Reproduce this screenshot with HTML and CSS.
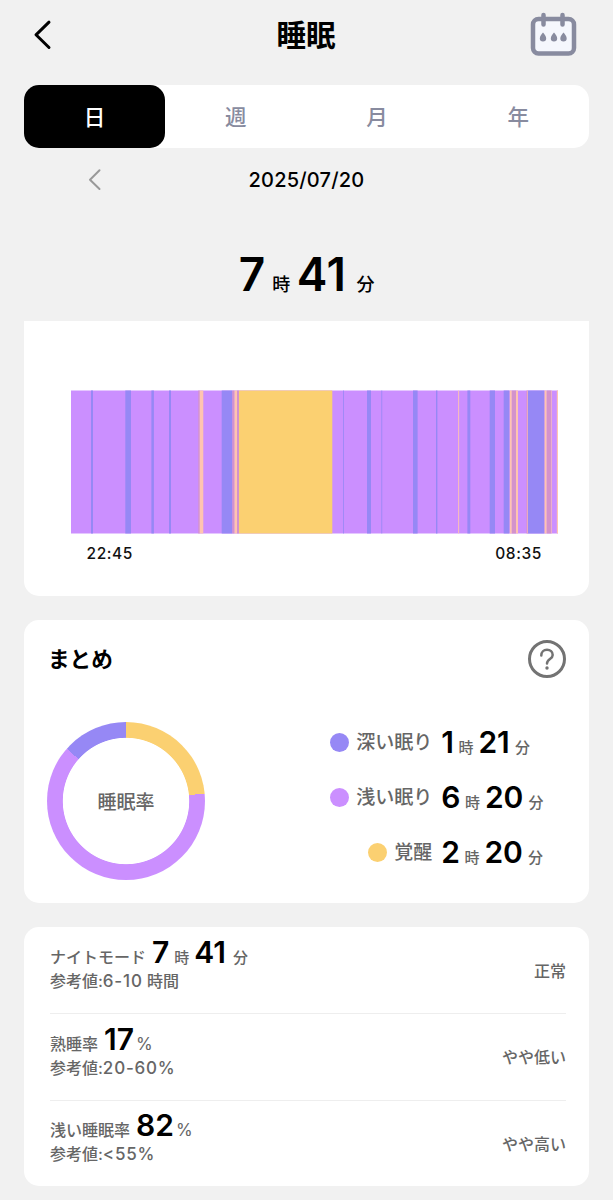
FILE: index.html
```html
<!DOCTYPE html>
<html lang="ja">
  <head>
    <meta charset="UTF-8" />
    <meta name="viewport" content="width=device-width, initial-scale=1.0" />
    <title>睡眠</title>
    <link rel="stylesheet" href="styles.css" />
  </head>

  <body>
    <header class="header">
      <svg class="back" width="20" height="36" viewBox="0 0 20 36">
        <path d="M17 5.200 L4 17.800 L17 30.500" />
      </svg>
      <h1>睡眠</h1>
      <svg class="calendar" width="48" height="46" viewBox="0 0 48 46">
        <rect x="4" y="7" width="41" height="34.500" rx="5.500" />
        <path d="M14.500 3v9.500M33.500 3v9.500" />
        <g class="drops">
          <path d="M14 20.500c1.300 1.600 3.200 3.900 3.200 5.800a3.200 3.200 0 0 1-6.400 0c0-1.900 1.900-4.200 3.200-5.800z" />
          <path d="M25 20.500c1.300 1.600 3.200 3.900 3.200 5.800a3.200 3.200 0 0 1-6.400 0c0-1.900 1.900-4.200 3.200-5.800z" />
          <path d="M34.500 20.500c1.300 1.600 3.200 3.900 3.200 5.800a3.200 3.200 0 0 1-6.400 0c0-1.900 1.900-4.200 3.200-5.800z" />
        </g>
      </svg>
    </header>

    <nav class="tabs">
      <button class="tab active">日</button>
      <button class="tab">週</button>
      <button class="tab">月</button>
      <button class="tab">年</button>
    </nav>

    <div class="date-row">
      <svg class="prev" width="16" height="26" viewBox="0 0 16 26">
        <path d="M12.500 3.300 L3 12.700 L12.500 22" />
      </svg>
      <span class="date">2025/07/20</span>
    </div>

    <p class="total"><b>7</b><span>時</span><b>41</b><span>分</span></p>

    <section class="card chart">
      <svg class="stages" width="487" height="144" viewBox="71 0 487 144">
        <rect class="light" x="71" y="0.500" width="487" height="143" />
        <g class="deep">
          <rect x="91" y="0.500" width="2" height="143" />
          <rect x="125.300" y="0.500" width="5.700" height="143" />
          <rect x="151.400" y="0.500" width="2.500" height="143" />
          <rect x="169" y="0.500" width="2" height="143" />
          <rect x="221.700" y="0.500" width="10.600" height="143" />
          <rect x="343" y="0.500" width="0.800" height="143" />
          <rect x="367" y="0.500" width="4" height="143" />
          <rect x="381.400" y="0.500" width="0.800" height="143" />
          <rect x="413" y="0.500" width="4.600" height="143" />
          <rect x="436" y="0.500" width="1.400" height="143" />
          <rect x="467.400" y="0.500" width="2.900" height="143" />
          <rect x="489.700" y="0.500" width="5.300" height="143" />
          <rect x="503.700" y="0.500" width="5.600" height="143" />
          <rect x="528" y="0.500" width="16.400" height="143" />
        </g>
        <g class="mixed">
          <rect x="198.300" y="0.500" width="1.400" height="143" />
          <rect x="232.300" y="0.500" width="2.200" height="143" />
          <rect x="237" y="0.500" width="2" height="143" />
          <rect x="511.700" y="0.500" width="4.300" height="143" />
          <rect x="526.500" y="0.500" width="1.500" height="143" />
          <rect x="546.700" y="0.500" width="4.600" height="143" />
        </g>
        <g class="pale">
          <rect x="199.700" y="0.500" width="3.600" height="143" />
          <rect x="234.500" y="0.500" width="2.500" height="143" />
          <rect x="458.200" y="0.500" width="0.900" height="143" />
          <rect x="509.800" y="0.500" width="1.900" height="143" />
          <rect x="516" y="0.500" width="2" height="143" />
          <rect x="527.300" y="0.500" width="0.500" height="143" />
          <rect x="544.600" y="0.500" width="2" height="143" />
          <rect x="551.300" y="0.500" width="0.600" height="143" />
          <rect x="556.800" y="0.500" width="1.200" height="143" />
        </g>
        <rect class="awake" x="239" y="0.500" width="93.300" height="143" />
      </svg>
      <div class="times">
        <span>22:45</span>
        <span>08:35</span>
      </div>
    </section>

    <section class="card summary">
      <div class="summary-head">
        <h2>まとめ</h2>
        <svg class="help" width="40" height="40" viewBox="0 0 40 40">
          <circle cx="20" cy="20" r="17.500" />
          <path d="M14.300 16.500c0-3.500 2.400-5.700 5.700-5.700s5.700 2.100 5.700 5.100c0 4.300-5.700 3.900-5.700 8.600" />
          <circle class="dot" cx="20" cy="29" r="1.700" />
        </svg>
      </div>
      <div class="summary-body">
        <div class="donut"><span>睡眠率</span></div>
        <div class="legend">
          <div class="label"><i class="deep"></i>深い眠り</div>
          <div class="value"><b>1</b><span>時</span><b>21</b><span>分</span></div>
          <div class="label"><i class="light"></i>浅い眠り</div>
          <div class="value"><b>6</b><span>時</span><b>20</b><span>分</span></div>
          <div class="label"><i class="awake"></i>覚醒</div>
          <div class="value"><b>2</b><span>時</span><b>20</b><span>分</span></div>
        </div>
      </div>
    </section>

    <section class="card metrics">
      <div class="metric">
        <div class="info">
          <div class="value">ナイトモード<b>7</b><span>時</span><b>41</b><span>分</span></div>
          <div class="ref">参考値:<em>6-10</em> 時間</div>
        </div>
        <div class="status">正常</div>
      </div>
      <div class="metric">
        <div class="info">
          <div class="value">熟睡率<b>17</b><span class="pct">%</span></div>
          <div class="ref">参考値:<em>20-60%</em></div>
        </div>
        <div class="status">やや低い</div>
      </div>
      <div class="metric">
        <div class="info">
          <div class="value">浅い睡眠率<b>82</b><span class="pct">%</span></div>
          <div class="ref">参考値:<em>&lt;55%</em></div>
        </div>
        <div class="status">やや高い</div>
      </div>
    </section>
  </body>
</html>
```
FILE: styles.css
```css
* {
  box-sizing: border-box;
}

body {
  margin: 0;
  padding: 0 24px;
  height: 1200px;
  background: #f1f1f1;
  color: #000;
  font-family: Inter, "Noto Sans CJK JP", sans-serif;
}

svg {
  display: block;
  fill: none;
  stroke-linecap: round;
  stroke-linejoin: round;
}

h1,
h2,
p {
  margin: 0;
}

b {
  font-weight: 600;
}

/* header */
.header {
  display: flex;
  justify-content: space-between;
  align-items: center;
  height: 70px;
  padding: 0 12px 0 8px;
}

.header h1 {
  margin-left: 31px;
  font-size: 29.500px;
  font-weight: 700;
  line-height: 40px;
}

.back path {
  stroke: #000;
  stroke-width: 3;
}

.calendar {
  stroke: #888b9f;
  stroke-width: 4.5;
}

.calendar rect {
  fill: #f5f7fd;
}

.calendar .drops {
  fill: #888b9f;
  stroke: none;
}

/* tabs */
.tabs {
  display: grid;
  grid-template-columns: repeat(4, 1fr);
  height: 63px;
  margin-top: 15px;
  background: #fff;
  border-radius: 15px;
}

.tab {
  padding: 0;
  border: 0;
  border-radius: 15px;
  background: none;
  color: #888b9f;
  font: 500 21.500px/30px Inter, "Noto Sans CJK JP", sans-serif;
}

.tab.active {
  background: #000;
  color: #fff;
}

.date-row {
  display: grid;
  grid-template-columns: 142px 1fr 142px;
  align-items: center;
  height: 64px;
}

.prev {
  justify-self: center;
}

.prev path {
  stroke: #999;
  stroke-width: 2;
}

.date {
  text-align: center;
  font-size: 20px;
  font-weight: 500;
  letter-spacing: 0.2px;
}

.total {
  display: flex;
  justify-content: center;
  align-items: baseline;
  height: 109px;
  padding-top: 34px;
  font-size: 18px;
  font-weight: 500;
  line-height: 56px;
}

.total b {
  font-size: 46px;
}

.total b:nth-of-type(2) {
  letter-spacing: 0.8px;
}

.total span {
  margin: 0 6.500px 0 7px;
}

.total span:last-child {
  margin: 0 0 0 9.500px;
}

/* cards */
.card {
  margin-bottom: 24px;
  background: #fff;
  border-radius: 15px;
}

.chart {
  height: 275px;
  padding: 69px 31px 0 47px;
  border-radius: 0 0 15px 15px;
}

.light {
  fill: #cb8fff;
  color: #cb8fff;
}

.deep {
  fill: #9688f5;
  color: #9688f5;
}

.mixed {
  fill: #d392cc;
}

.pale {
  fill: #ffc4b0;
}

.awake {
  fill: #fbd071;
  color: #fbd071;
}

.times {
  display: flex;
  justify-content: space-between;
  padding: 9px 16px 0 15.500px;
  color: #111;
  font-size: 15.500px;
  font-weight: 500;
  line-height: 22px;
  letter-spacing: 0.6px;
}

.summary {
  height: 283px;
  padding: 19px 22px 0 24px;
}

.summary-head {
  display: flex;
  justify-content: space-between;
  align-items: center;
  height: 40px;
}

.summary-head h2 {
  font-size: 21.600px;
  font-weight: 700;
  line-height: 30px;
}

.help {
  stroke: #737373;
  stroke-width: 3;
}

.help path {
  stroke-width: 2.5;
}

.help .dot {
  fill: #737373;
  stroke: none;
}

.summary-body {
  display: flex;
  margin: 43px 0 0 -1px;
}

.donut {
  display: grid;
  place-items: center;
  width: 158px;
  height: 158px;
  padding-bottom: 2px;
  border-radius: 50%;
  background:
    radial-gradient(closest-side, #fff 79.500%, transparent 80.500%),
    conic-gradient(#fbd071 0 23.500%, #cb8fff 0 86.500%, #9688f5 0);
  color: #666;
  font-size: 19px;
  font-weight: 500;
}

.legend {
  display: grid;
  grid-template-columns: auto auto;
  grid-auto-rows: 55px;
  column-gap: 9px;
  margin: -7px 0 0 auto;
  padding-right: 23.500px;
}

.legend .label {
  display: flex;
  justify-content: flex-end;
  align-items: center;
  color: #666;
  font-size: 19px;
  font-weight: 500;
  line-height: 55px;
}

.label i {
  width: 19px;
  height: 19px;
  margin-right: 7.500px;
  border-radius: 50%;
  background: currentColor;
}

.value {
  display: flex;
  align-items: baseline;
  color: #666;
  font-size: 16px;
  font-weight: 500;
}

.value b {
  color: #000;
  font-size: 30px;
}

.value span {
  margin: 0 5px;
  font-size: 15px;
}

.value span:last-child {
  margin: 0 0 0 6px;
}

.legend .value {
  line-height: 55px;
}

.legend .value b {
  letter-spacing: -0.3px;
}

.legend .value span:last-child {
  margin-left: 5.500px;
}

/* metrics */
.metrics {
  height: 259px;
  padding: 0 23px 0 26px;
}

.metric {
  display: flex;
  justify-content: space-between;
  align-items: center;
  height: 86.300px;
  color: #666;
  font-size: 16px;
  font-weight: 500;
}

.metric + .metric {
  border-top: 1px solid #eee;
}

.info {
  padding-bottom: 9px;
}

.metric .value {
  height: 32px;
  line-height: 30px;
}

.metric b {
  margin-left: 6px;
}

.metric .value span + b {
  margin-left: 0;
}

.metric .value b + span:last-child {
  margin-left: 7px;
}

.metric .value b + .pct:last-child {
  margin-left: 2px;
  font-size: 17px;
  font-weight: 400;
}

.ref {
  line-height: 25px;
}

.ref em {
  font-style: normal;
  font-size: 17px;
  letter-spacing: 0.8px;
}

.status {
  padding-bottom: 1px;
}
```
